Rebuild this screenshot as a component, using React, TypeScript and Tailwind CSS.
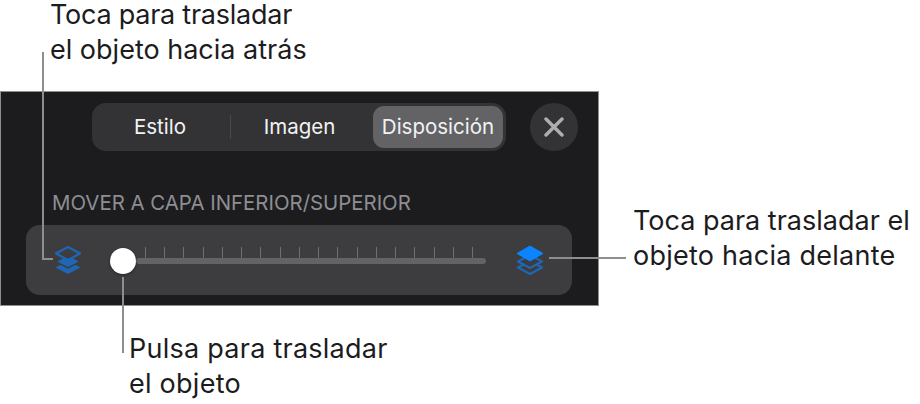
const TICKS = Array.from({ length: 18 })

function LayersDown() {
  return (
    <svg width="30" height="32" viewBox="0 0 30 32" className="shrink-0">
      <path d="M15 17 L27.5 23.5 L15 30 L2.5 23.5 Z" fill="#1f66b5" />
      <path d="M15 11 L27.5 17.5 L15 24 L2.5 17.5 Z" fill="#1f66b5" stroke="#3d3d3f" strokeWidth="1.5" />
      <path d="M15 3 L27 9.5 L15 16 L3 9.5 Z" fill="#3d3d3f" stroke="#1f66b5" strokeWidth="2" strokeLinejoin="round" />
    </svg>
  )
}

function LayersUp() {
  return (
    <svg width="30" height="32" viewBox="0 0 30 32" className="shrink-0">
      <path d="M15 17 L27 23.5 L15 30 L3 23.5 Z" fill="none" stroke="#1f66b5" strokeWidth="2" strokeLinejoin="round" />
      <path d="M15 11 L27 17.5 L15 24 L3 17.5 Z" fill="#3d3d3f" stroke="#1f66b5" strokeWidth="2" strokeLinejoin="round" />
      <path d="M15 2 L28 9.5 L15 17 L2 9.5 Z" fill="#0a84ff" stroke="#0a84ff" strokeLinejoin="round" />
    </svg>
  )
}

export default function App() {
  return (
    <div className="relative w-[920px] h-[404px] bg-white font-['Inter',sans-serif] text-[#1c1c1e]">
      {/* callout texts */}
      <div className="absolute left-[50px] top-0 text-[27px] whitespace-nowrap">
        <p className="leading-[33px] -mb-[4px] tracking-[-0.25px] translate-y-[-2px]">Toca para trasladar</p>
        <p className="mt-[3px] leading-[35px]">el objeto hacia atrás</p>
      </div>
      <div className="absolute left-[633px] top-[203px] text-[27px] leading-[35px] whitespace-nowrap">
        <p>Toca para trasladar el</p>
        <p className="tracking-[0.25px]">objeto hacia delante</p>
      </div>
      <div className="absolute left-[129px] top-[331px] text-[27px] leading-[35px] tracking-[0.25px] whitespace-nowrap">
        <p>Pulsa para trasladar</p>
        <p>el objeto</p>
      </div>

      {/* panel */}
      <div className="absolute left-0 top-[91px] w-[599px] h-[215px] bg-[#1c1c1e] border border-[#8f8f8f] pt-[11px] flex flex-col">
        <div className="flex items-center pl-[91px]">
          <div className="flex items-center w-[414px] h-[48px] rounded-[14px] bg-[#333336] p-[3px] text-[20.5px] text-[#f2f2f3]">
            <div className="w-[130px] mr-[5px] text-center">Estilo</div>
            <div className="w-px h-[24px] bg-[#4a4a4d]" />
            <div className="w-[137px] mr-[5px] text-center">Imagen</div>
            <div className="flex-1 h-full rounded-[11px] bg-[#636366] flex items-center justify-center">Disposición</div>
          </div>
          <div className="ml-[24px] w-[48px] h-[48px] rounded-full bg-[#333336] flex items-center justify-center">
            <svg width="20" height="20" viewBox="0 0 20 20">
              <path d="M2 2 L18 18 M18 2 L2 18" stroke="#aeaeb2" strokeWidth="3.4" strokeLinecap="round" />
            </svg>
          </div>
        </div>

        <div className="mt-[39px] pl-[51px] text-[20.4px] leading-[26px] text-[#8e8e93] whitespace-nowrap">
          MOVER A CAPA INFERIOR/SUPERIOR
        </div>

        <div className="mt-[9px] ml-[25px] w-[546px] h-[70px] rounded-[14px] bg-[#3d3d3f] flex items-center pl-[27px] pr-[27px]">
          <LayersDown />
          <div className="relative flex-1 h-full mx-[12px]">
            {/* ticks */}
            <div className="absolute left-[50px] top-[22px] w-[328px] flex justify-between">
              {TICKS.map((_, i) => (
                <div key={i} className="w-px h-[12px] bg-[#6f6f72]" />
              ))}
            </div>
            <div className="absolute left-[41px] right-[17px] top-[33px] h-[6px] rounded-full bg-[#636366]" />
            <div className="absolute left-[15px] top-[23px] w-[26px] h-[26px] rounded-full bg-white shadow-[0_1px_3px_rgba(0,0,0,0.4)]" />
          </div>
          <LayersUp />
        </div>
      </div>

      {/* leader lines */}
      <div className="absolute left-[42px] top-[52px] w-[2px] h-[207px] bg-[#8e8e8e]" />
      <div className="absolute left-[42px] top-[258px] w-[11px] h-[2px] bg-[#8e8e8e]" />
      <div className="absolute left-[549px] top-[257px] w-[77px] h-[2px] bg-[#8e8e8e]" />
      <div className="absolute left-[122px] top-[277px] w-[2px] h-[76px] bg-[#8e8e8e]" />
    </div>
  )
}
